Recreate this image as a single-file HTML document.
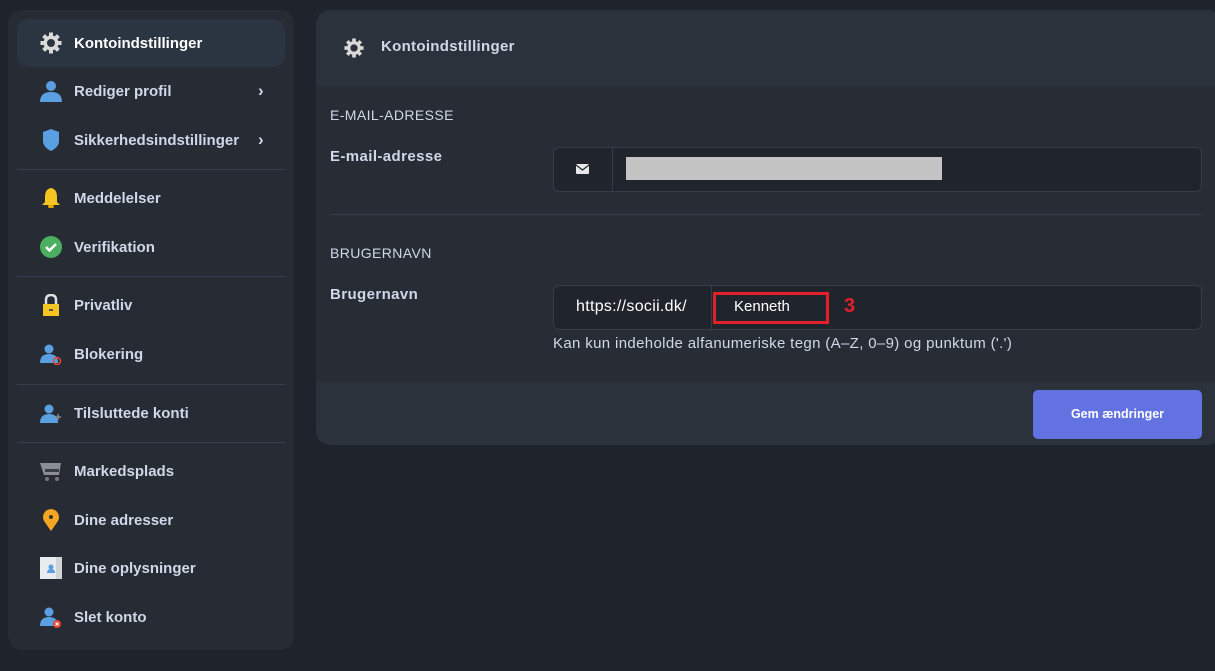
<!DOCTYPE html>
<html><head><meta charset="utf-8"><style>
*{box-sizing:border-box;margin:0;padding:0}
body{width:1215px;height:671px;background:#1f232b;font-family:"Liberation Sans",sans-serif;color:#cfd8e8;position:relative;overflow:hidden}
.side{position:absolute;left:8px;top:10px;width:286px;height:640px;background:#262b34;border-radius:14px}
.item{position:absolute;left:9px;width:268px;height:48px;border-radius:12px;font-size:15px;font-weight:bold}
.item .ic{position:absolute;left:23px;top:13px;width:22px;height:22px}
.item span{position:absolute;left:57px;top:16px}
.item .ch{position:absolute;left:241px;top:14px;font-size:17px}
.act{background:#2b3441;color:#fff}
.sep{position:absolute;left:9px;width:268px;height:1px;background:#353f4d}
.main{position:absolute;left:316px;top:10px;width:905px;height:435px;background:#272c35;border-radius:14px;overflow:hidden}
.hd{position:absolute;left:0;top:0;right:0;height:76px;background:#2c323b}
.ft{position:absolute;left:0;top:373px;right:0;height:62px;background:#2c323b}
.t{position:absolute;white-space:nowrap}
.box{position:absolute;border:1px solid #363d49;background:#20252d;border-radius:6px}
</style></head><body>
<div class="side">
 <div class="item act" style="top:9px"><svg class="ic" viewBox="0 0 22 22"><g fill="#d9d9d9"><circle cx="11" cy="11" r="7.5"/><rect x="9" y="0.5" width="4" height="21"/><rect x="0.5" y="9" width="21" height="4"/><rect x="9" y="0.5" width="4" height="21" transform="rotate(45 11 11)"/><rect x="9" y="0.5" width="4" height="21" transform="rotate(-45 11 11)"/></g><circle cx="11" cy="11" r="4" fill="#2b3441"/></svg><span>Kontoindstillinger</span></div>
 <div class="item" style="top:57px"><svg class="ic" viewBox="0 0 22 22"><circle cx="11" cy="6" r="5" fill="#5b9fe3"/><path d="M0 22 Q0 12 11 12 Q22 12 22 22Z" fill="#5b9fe3"/></svg><span>Rediger profil</span><b class="ch">›</b></div>
 <div class="item" style="top:106px"><svg class="ic" viewBox="0 0 22 22"><path d="M3 3 L11 0 L19 3 L19 12 Q19 18 11 22 Q3 18 3 12Z" fill="#5b9fe3"/></svg><span>Sikkerhedsindstillinger</span><b class="ch">›</b></div>
 <div class="sep" style="top:159px"></div>
 <div class="item" style="top:164px"><svg class="ic" viewBox="0 0 22 22"><path d="M11 1 Q5 2 5 10 L5 15 L2 18 L20 18 L17 15 L17 10 Q17 2 11 1Z" fill="#f5c522"/><rect x="8" y="18" width="6" height="3" rx="1.5" fill="#e0a800"/></svg><span>Meddelelser</span></div>
 <div class="item" style="top:213px"><svg class="ic" viewBox="0 0 22 22"><circle cx="11" cy="11" r="11" fill="#4caf60"/><path d="M6 11 L9.5 14.5 L16 8" stroke="#fff" stroke-width="2.5" fill="none"/></svg><span>Verifikation</span></div>
 <div class="sep" style="top:266px"></div>
 <div class="item" style="top:271px"><svg class="ic" viewBox="0 0 22 22"><path d="M6 10 V6 Q6 1 11 1 Q16 1 16 6 V10" stroke="#e0e0e0" stroke-width="2.5" fill="none"/><rect x="3" y="10" width="16" height="12" fill="#f5c522"/><rect x="9" y="15" width="4" height="2" fill="#555"/></svg><span>Privatliv</span></div>
 <div class="item" style="top:320px"><svg class="ic" viewBox="0 0 22 22"><circle cx="9" cy="6" r="4.5" fill="#5b9fe3"/><path d="M0 20 Q0 11 9 11 Q18 11 18 20Z" fill="#5b9fe3"/><circle cx="17" cy="18" r="3.5" fill="none" stroke="#e8452c" stroke-width="1.5"/></svg><span>Blokering</span></div>
 <div class="sep" style="top:374px"></div>
 <div class="item" style="top:379px"><svg class="ic" viewBox="0 0 22 22"><circle cx="9" cy="7" r="4.5" fill="#5b9fe3"/><path d="M0 21 Q0 12 9 12 Q18 12 18 21Z" fill="#5b9fe3"/><path d="M18 12v6M15 15h6" stroke="#888" stroke-width="1.5"/></svg><span>Tilsluttede konti</span></div>
 <div class="sep" style="top:432px"></div>
 <div class="item" style="top:437px"><svg class="ic" viewBox="0 0 22 22"><path d="M0 3 H21 L19 15 H4Z" fill="#8a8e96"/><rect x="5" y="9" width="14" height="3" fill="#3a3d44"/><circle cx="7" cy="19" r="2" fill="#777"/><circle cx="17" cy="19" r="2" fill="#777"/></svg><span>Markedsplads</span></div>
 <div class="item" style="top:486px"><svg class="ic" viewBox="0 0 22 22"><path d="M11 22 L4 12 A8 8 0 1 1 18 12Z" fill="#f5a623"/><circle cx="11" cy="8" r="2" fill="#333"/></svg><span>Dine adresser</span></div>
 <div class="item" style="top:534px"><svg class="ic" viewBox="0 0 22 22"><rect x="0" y="0" width="22" height="22" fill="#e9ecef"/><rect x="16" y="0" width="6" height="22" fill="#d0d4d8"/><circle cx="11" cy="10" r="2.5" fill="#5b9fe3"/><path d="M7 16 Q7 12 11 12 Q15 12 15 16Z" fill="#5b9fe3"/></svg><span>Dine oplysninger</span></div>
 <div class="item" style="top:583px"><svg class="ic" viewBox="0 0 22 22"><circle cx="9" cy="6" r="4.5" fill="#5b9fe3"/><path d="M0 20 Q0 11 9 11 Q18 11 18 20Z" fill="#5b9fe3"/><circle cx="17" cy="18" r="4" fill="#e8452c"/><path d="M15.5 16.5l3 3M18.5 16.5l-3 3" stroke="#fff" stroke-width="1.2"/></svg><span>Slet konto</span></div>
</div>
<div class="main">
 <div class="hd"></div>
 <svg style="position:absolute;left:28px;top:28px" width="20" height="20" viewBox="0 0 22 22"><g fill="#d9d9d9"><circle cx="11" cy="11" r="7.5"/><rect x="9" y="0.5" width="4" height="21"/><rect x="0.5" y="9" width="21" height="4"/><rect x="9" y="0.5" width="4" height="21" transform="rotate(45 11 11)"/><rect x="9" y="0.5" width="4" height="21" transform="rotate(-45 11 11)"/></g><circle cx="11" cy="11" r="4" fill="#2c323b"/></svg>
 <div class="t" style="left:65px;top:28px;font-size:15px;font-weight:bold;letter-spacing:0.3px">Kontoindstillinger</div>
 <div class="t" style="left:14px;top:97px;font-size:14px;letter-spacing:0.4px">E-MAIL-ADRESSE</div>
 <div class="t" style="left:14px;top:138px;font-size:15px;font-weight:bold;letter-spacing:0.4px">E-mail-adresse</div>
 <div class="box" style="left:237px;top:137px;width:649px;height:45px"></div>
 <div style="position:absolute;left:296px;top:138px;width:1px;height:43px;background:#363d49"></div>
 <svg style="position:absolute;left:260px;top:154px" width="13" height="10" viewBox="0 0 13 10"><rect width="13" height="10" rx="1" fill="#e8e8e8"/><path d="M0 1 L6.5 6 L13 1" stroke="#20252d" stroke-width="1.2" fill="none"/></svg>
 <div style="position:absolute;left:310px;top:147px;width:316px;height:23px;background:#c4c4c4"></div>
 <div style="position:absolute;left:14px;top:204px;width:872px;height:1px;background:#353d4a"></div>
 <div class="t" style="left:14px;top:235px;font-size:14px;letter-spacing:0.4px">BRUGERNAVN</div>
 <div class="t" style="left:14px;top:276px;font-size:15px;font-weight:bold;letter-spacing:0.4px">Brugernavn</div>
 <div class="box" style="left:237px;top:275px;width:649px;height:45px"></div>
 <div style="position:absolute;left:395px;top:276px;width:1px;height:43px;background:#363d49"></div>
 <div class="t" style="left:260px;top:288px;font-size:16px;color:#fff;letter-spacing:0.3px">https://socii.dk/</div>
 <div style="position:absolute;left:397px;top:282px;width:116px;height:32px;border:3px solid #e3202a"></div>
 <div class="t" style="left:418px;top:288px;font-size:15px;color:#fff">Kenneth</div>
 <div class="t" style="left:528px;top:285px;font-size:20px;font-weight:bold;color:#e3202a">3</div>
 <div class="t" style="left:237px;top:325px;font-size:15px;letter-spacing:0.35px">Kan kun indeholde alfanumeriske tegn (A–Z, 0–9) og punktum ('.')</div>
 <div class="ft"></div>
 <div style="position:absolute;left:717px;top:380px;width:169px;height:49px;background:#6272e0;border-radius:5px;color:#fff;font-size:12.5px;font-weight:bold;text-align:center;line-height:49px">Gem ændringer</div>
</div>
</body></html>
